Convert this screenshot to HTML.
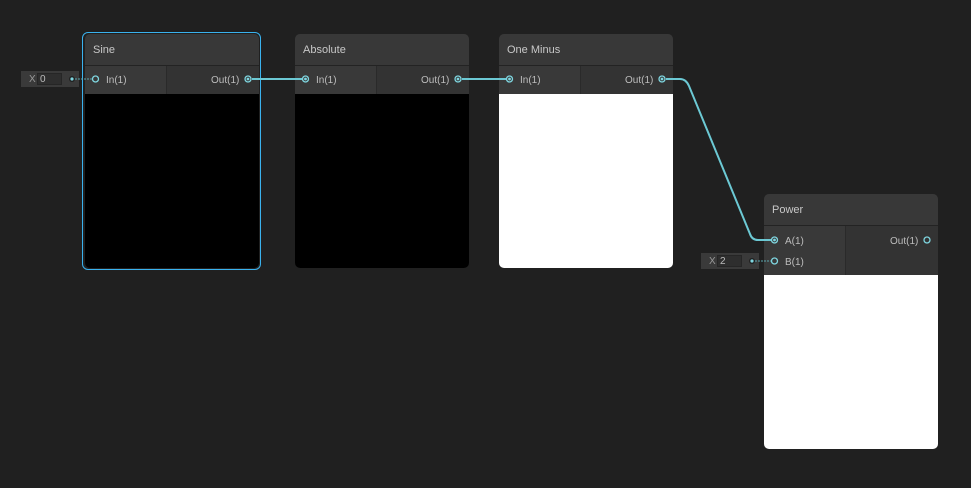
<!DOCTYPE html>
<html><head><meta charset="utf-8"><style>
body{margin:0;width:971px;height:488px;background:#202020;overflow:hidden;position:relative;font-family:"Liberation Sans","DejaVu Sans",sans-serif;font-size:10px;color:#c4c4c4}
.n{position:absolute;width:174px;background:#2e2e2e;border-radius:5px;overflow:hidden}
.h{height:31px;background:#383838;border-bottom:1px solid #232323;line-height:33px;padding-left:8px;font-size:11px;color:#c8c8c8}
.pl{position:absolute;left:0;width:81px;background:#393939;border-right:1px solid #2a2a2a}
.pr{position:absolute;left:82px;right:0;background:#333}
.t{position:absolute;font-size:10px;color:#bdbdbd}
.pv{position:absolute;left:0;right:0;bottom:0}
.inp{position:absolute;background:#3a3a3a;height:16px}
.inp span{position:absolute;left:8px;top:3px;color:#999}
.inp i{position:absolute;left:16px;top:2px;width:25px;height:12px;background:#2e2e2e;border:1px solid #262626;font-style:normal;color:#bbb;padding-left:2px;box-sizing:border-box;line-height:11px}
</style></head><body>
<div style="position:absolute;left:82px;top:32px;width:177px;height:236px;border:1px solid #3ab2ee;border-radius:6px"></div>
<div class="n" style="left:85px;top:34px;height:234px">
 <div class="h">Sine</div>
 <div class="pl" style="top:32px;height:28px"></div><div class="pr" style="top:32px;height:28px"></div>
 <div class="t" style="left:21px;top:41px">In(1)</div><div class="t" style="left:126px;top:41px">Out(1)</div>
 <div class="pv" style="top:60px;background:#000"></div>
</div>
<div class="n" style="left:295px;top:34px;height:234px">
 <div class="h">Absolute</div>
 <div class="pl" style="top:32px;height:28px"></div><div class="pr" style="top:32px;height:28px"></div>
 <div class="t" style="left:21px;top:41px">In(1)</div><div class="t" style="left:126px;top:41px">Out(1)</div>
 <div class="pv" style="top:60px;background:#000"></div>
</div>
<div class="n" style="left:499px;top:34px;height:234px">
 <div class="h">One Minus</div>
 <div class="pl" style="top:32px;height:28px"></div><div class="pr" style="top:32px;height:28px"></div>
 <div class="t" style="left:21px;top:41px">In(1)</div><div class="t" style="left:126px;top:41px">Out(1)</div>
 <div class="pv" style="top:60px;background:#fff"></div>
</div>
<div class="n" style="left:764px;top:194px;height:255px">
 <div class="h">Power</div>
 <div class="pl" style="top:32px;height:49px"></div><div class="pr" style="top:32px;height:49px"></div>
 <div class="t" style="left:21px;top:42px">A(1)</div><div class="t" style="left:21px;top:63px">B(1)</div>
 <div class="t" style="left:126px;top:42px">Out(1)</div>
 <div class="pv" style="top:81px;background:#fff"></div>
</div>
<div class="inp" style="left:21px;top:71px;width:58px"><span>X</span><i>0</i></div>
<div class="inp" style="left:701px;top:253px;width:58px"><span>X</span><i>2</i></div>
<svg width="971" height="488" style="position:absolute;left:0;top:0">
 <g stroke="#6cc9d4" stroke-width="2" fill="none">
  <path d="M252 79H302"/><path d="M462 79H506"/>
  <path d="M666 79H680Q686 79 689 86L750 234Q752 240 758 240H771"/>
 </g>
 <g stroke="#5aa6ae" stroke-width="1" stroke-dasharray="2 1" fill="none">
  <path d="M72 79H92"/><path d="M752 261H772"/>
 </g>
 <g fill="#202020"><circle cx="72" cy="79" r="3"/><circle cx="752" cy="261" r="3"/></g>
 <g fill="#7fd6e0"><circle cx="72" cy="79" r="1.6"/><circle cx="752" cy="261" r="1.6"/></g>
 <g stroke="#7fd6e0" stroke-width="1.3" fill="none">
  <circle cx="95.5" cy="79" r="3"/><circle cx="248" cy="79" r="3"/>
  <circle cx="305.5" cy="79" r="3"/><circle cx="458" cy="79" r="3"/>
  <circle cx="509.5" cy="79" r="3"/><circle cx="662" cy="79" r="3"/>
  <circle cx="774.5" cy="240" r="3"/><circle cx="774.5" cy="261" r="3"/>
  <circle cx="927" cy="240" r="3"/>
 </g>
 <g fill="#7fd6e0"><circle cx="248" cy="79" r="1.4"/><circle cx="305.5" cy="79" r="1.4"/><circle cx="458" cy="79" r="1.4"/><circle cx="509.5" cy="79" r="1.4"/><circle cx="662" cy="79" r="1.4"/><circle cx="774.5" cy="240" r="1.4"/></g>
</svg>
</body></html>
